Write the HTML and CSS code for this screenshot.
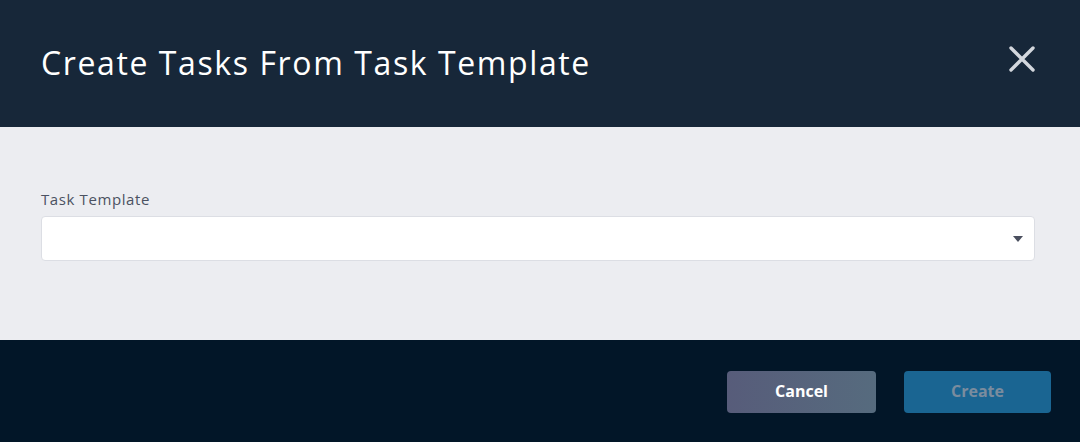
FILE: index.html
```html
<!DOCTYPE html>
<html>
<head>
<meta charset="utf-8">
<link rel="stylesheet" href="styles.css">
</head>
<body>
<div class="modal">
  <header class="modal-header">
    <h1 class="modal-title">Create Tasks From Task Template</h1>
    <button class="close-btn" aria-label="Close">
      <svg width="26" height="26" viewBox="0 0 26 26"><path d="M2 2L24 24M24 2L2 24" stroke="#d3d7dd" stroke-width="3.4" stroke-linecap="round"/></svg>
    </button>
  </header>
  <main class="modal-body">
    <label class="field-label">Task Template</label>
    <div class="select">
      <span class="select-arrow"></span>
    </div>
  </main>
  <footer class="modal-footer">
    <button class="btn btn-cancel">Cancel</button>
    <button class="btn btn-create">Create</button>
  </footer>
</div>
</body>
</html>
```
FILE: styles.css
```css
* { box-sizing: border-box; }
html, body { margin: 0; padding: 0; }
body {
  width: 1080px;
  height: 442px;
  overflow: hidden;
  font-family: "Open Sans", "Noto Sans", sans-serif;
}
.modal { display: flex; flex-direction: column; height: 442px; }
.modal-header {
  height: 127px;
  background: #172739;
  display: flex;
  align-items: center;
  justify-content: space-between;
  padding: 0 45px 3px 41px;
}
.modal-title {
  margin: 0;
  color: #ffffff;
  font-weight: 400;
  font-size: 32px;
  letter-spacing: 1.6px;
}
.close-btn {
  background: none;
  border: 0;
  padding: 0;
  width: 26px;
  height: 26px;
  display: flex;
  margin-top: -7px;
}
.modal-body {
  height: 213px;
  background: #ecedf1;
  padding: 62px 45px 0 41px;
}
.field-label {
  display: block;
  color: #4b5262;
  font-size: 15px;
  line-height: 20px;
  margin-bottom: 7px;
  letter-spacing: 0.6px;
}
.select {
  height: 45px;
  background: #ffffff;
  border: 1px solid #dcdee4;
  border-radius: 4px;
  display: flex;
  align-items: center;
  justify-content: flex-end;
  padding-right: 11px;
}
.select-arrow {
  width: 0; height: 0;
  border-left: 5px solid transparent;
  border-right: 5px solid transparent;
  border-top: 6px solid #4a4f5e;
}
.modal-footer {
  flex: 1;
  background: #021628;
  display: flex;
  justify-content: flex-end;
  align-items: flex-start;
  padding: 31px 29px 0 0;
  gap: 28px;
}
.btn {
  height: 42px;
  border: 0;
  border-radius: 4px;
  font-family: "Open Sans", "Noto Sans", sans-serif;
  font-weight: 700;
  font-size: 16px;
  padding: 0 0 2px;
}
.btn-cancel {
  width: 149px;
  background: linear-gradient(90deg, #575c7a, #566b7e);
  color: #ffffff;
}
.btn-create {
  width: 147px;
  background: #1a6592;
  color: #7a8c9e;
}
```
